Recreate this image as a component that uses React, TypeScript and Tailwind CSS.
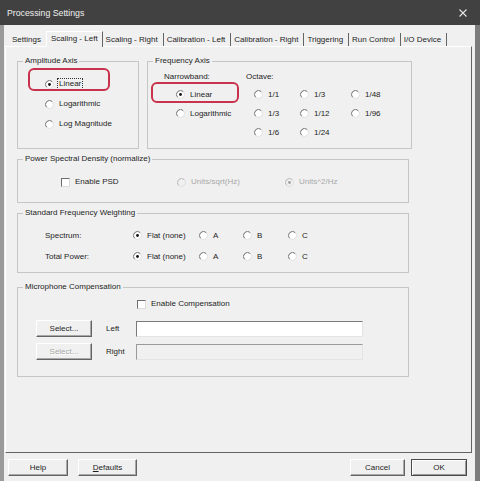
import type { ReactNode } from "react";

function RadioDot({ checked, disabled }: { checked?: boolean; disabled?: boolean }) {
  return (
    <svg width="9" height="9" viewBox="0 0 9 9" className="shrink-0">
      <circle cx="4.5" cy="4.5" r="4" fill={disabled ? "#f0f0f0" : "#ffffff"} />
      <path
        d="M1.67 7.33A4 4 0 0 1 7.33 1.67"
        fill="none"
        stroke={disabled ? "#b4b4b4" : "#6e6e6e"}
      />
      <path d="M7.33 1.67A4 4 0 0 1 1.67 7.33" fill="none" stroke="#dedede" />
      {checked ? (
        <circle cx="4.5" cy="4.5" r="1.4" fill={disabled ? "#a0a0a0" : "#111111"} />
      ) : null}
    </svg>
  );
}

function Radio({
  label,
  checked,
  disabled,
  focus,
  className = "",
}: {
  label: string;
  checked?: boolean;
  disabled?: boolean;
  focus?: boolean;
  className?: string;
}) {
  return (
    <div className={`flex items-center gap-[5px] ${className}`}>
      <RadioDot checked={checked} disabled={disabled} />
      {focus ? (
        <span className="-ml-[2px] border border-dotted border-[#333] px-[1px] leading-[10px]">
          {label}
        </span>
      ) : (
        <span className={disabled ? "text-[#a9a9a9]" : ""}>{label}</span>
      )}
    </div>
  );
}

function Check({ label, className = "" }: { label: string; className?: string }) {
  return (
    <div className={`flex items-center gap-[5px] ${className}`}>
      <span className="h-[9px] w-[9px] shrink-0 border border-t-[#6e6e6e] border-l-[#6e6e6e] border-r-[#dcdcdc] border-b-[#dcdcdc] bg-white" />
      <span>{label}</span>
    </div>
  );
}

function Group({
  title,
  className = "",
  children,
}: {
  title: string;
  className?: string;
  children: ReactNode;
}) {
  return (
    <fieldset className={`relative border border-[#c6c6c6] ${className}`}>
      <legend className="ml-[5px] px-[2px] leading-[10px]">{title}</legend>
      {children}
    </fieldset>
  );
}

function Btn({
  children,
  className = "",
  disabled,
  primary,
}: {
  children: ReactNode;
  className?: string;
  disabled?: boolean;
  primary?: boolean;
}) {
  const edge = primary
    ? "border border-[#4a4a4a] shadow-[inset_1px_1px_#ffffff,inset_-1px_-1px_#9a9a9a]"
    : "border border-t-white border-l-white border-r-[#646464] border-b-[#646464] shadow-[inset_-1px_-1px_#a8a8a8]";
  return (
    <div
      className={`flex h-[17px] items-center justify-center bg-[#f0f0f0] ${edge} ${
        disabled ? "text-[#a8a8a8] [text-shadow:1px_1px_#ffffff]" : ""
      } ${className}`}
    >
      {children}
    </div>
  );
}

const TABS = [
  "Scaling - Right",
  "Calibration - Left",
  "Calibration - Right",
  "Triggering",
  "Run Control",
  "I/O Device",
];

export default function App() {
  return (
    <div className="flex h-[481px] w-[480px] flex-col overflow-hidden bg-[#f0f0f0] font-['Liberation_Sans',Arial,sans-serif] text-[8px] leading-[10px] text-[#1e1e1e]">
      {/* title bar */}
      <div className="flex h-[25px] shrink-0 items-center justify-between bg-[#414141] pl-[7px] pr-[13px]">
        <span className="text-[8.75px] text-[#f0f0f0]">Processing Settings</span>
        <svg width="8" height="8" viewBox="0 0 8 8">
          <path d="M0.5 0.5L7.5 7.5M7.5 0.5L0.5 7.5" stroke="#e4e4e4" strokeWidth="1.1" />
        </svg>
      </div>

      <div className="flex flex-1 flex-col border-l-[4px] border-r-[5px] border-l-[#9a9a9a] border-r-[#7c7c7c]">
        {/* tabs */}
        <div className="flex h-[21px] shrink-0 items-end pl-[4px]">
          <div className="h-[13px] pl-[4px] pr-[5px] leading-[13px]">Settings</div>
          <div className="relative z-10 -mb-[1px] h-[16px] border-l border-t border-r border-l-white border-t-white border-r-[#646464] bg-[#f0f0f0] pl-[4px] pr-[4px] leading-[13px]">
            Scaling - Left
          </div>
          {TABS.map((t) => (
            <div
              key={t}
              className="h-[13px] border-r border-r-[#646464] pl-[3px] pr-[5px] leading-[13px]"
            >
              {t}
            </div>
          ))}
        </div>

        {/* tab page */}
        <div className="ml-[1px] flex h-[407px] w-[467px] shrink-0 flex-col border border-t-white border-l-white border-r-[#646464] border-b-[#646464] pl-[11px] pt-[9px]">
          <div className="flex items-start gap-[8px]">
            <Group title="Amplitude Axis" className="h-[93px] w-[122px]">
              <div className="flex flex-col pl-[27px] pt-[8px]">
                <Radio label="Linear" checked focus className="h-[20px]" />
                <Radio label="Logarithmic" className="h-[20px]" />
                <Radio label="Log Magnitude" className="h-[20px]" />
              </div>
              <div className="pointer-events-none absolute left-[10px] top-[2px] h-[23px] w-[82px] rounded-[6px] border-2 border-[#c8324c]" />
            </Group>

            <Group title="Frequency Axis" className="h-[93px] w-[263px]">
              <div className="flex pl-[16px] pt-[3px]">
                <div className="flex w-[82px] flex-col">
                  <div className="flex h-[16px] items-center">Narrowband:</div>
                  <Radio label="Linear" checked className="h-[19px] pl-[12px]" />
                  <Radio label="Logarithmic" className="h-[19px] pl-[12px]" />
                </div>
                <div className="flex flex-col">
                  <div className="flex h-[16px] items-center">Octave:</div>
                  <div className="grid grid-cols-[46px_51px_60px] pl-[8px]">
                    <Radio label="1/1" className="h-[19px]" />
                    <Radio label="1/3" className="h-[19px]" />
                    <Radio label="1/48" className="h-[19px]" />
                    <Radio label="1/3" className="h-[19px]" />
                    <Radio label="1/12" className="h-[19px]" />
                    <Radio label="1/96" className="h-[19px]" />
                    <Radio label="1/6" className="h-[19px]" />
                    <Radio label="1/24" className="h-[19px]" />
                  </div>
                </div>
              </div>
              <div className="pointer-events-none absolute left-[3px] top-[16px] h-[21px] w-[88px] rounded-[6px] border-2 border-[#c8324c]" />
            </Group>
          </div>

          <Group title="Power Spectral Density (normalize)" className="mt-[5px] h-[49px] w-[392px]">
            <div className="flex pl-[43px] pt-[8px]">
              <Check label="Enable PSD" className="h-[20px] w-[116px]" />
              <Radio label="Units/sqrt(Hz)" disabled className="h-[20px] w-[108px]" />
              <Radio label="Units^2/Hz" checked disabled className="h-[20px]" />
            </div>
          </Group>

          <Group title="Standard Frequency Weighting" className="mt-[5px] h-[65px] w-[392px]">
            <div className="flex flex-col pl-[27px] pt-[7px]">
              {["Spectrum:", "Total Power:"].map((row) => (
                <div key={row} className="flex h-[21px] items-center">
                  <span className="w-[88px]">{row}</span>
                  <Radio label="Flat (none)" checked className="w-[66px]" />
                  <Radio label="A" className="w-[44px]" />
                  <Radio label="B" className="w-[45px]" />
                  <Radio label="C" />
                </div>
              ))}
            </div>
          </Group>

          <Group title="Microphone Compensation" className="mt-[9px] h-[95px] w-[392px]">
            <div className="flex flex-col pl-[18px] pt-[4px]">
              <Check label="Enable Compensation" className="h-[16px] pl-[101px]" />
              <div className="mt-[8px] flex items-center">
                <Btn className="w-[56px]">Select...</Btn>
                <span className="ml-[14px] w-[30px]">Left</span>
                <div className="h-[16px] w-[227px] border border-t-[#7a7a7a] border-l-[#7a7a7a] border-r-[#e4e4e4] border-b-[#e4e4e4] bg-white" />
              </div>
              <div className="mt-[6px] flex items-center">
                <Btn className="w-[56px]" disabled>
                  Select...
                </Btn>
                <span className="ml-[14px] w-[30px]">Right</span>
                <div className="h-[16px] w-[227px] border border-t-[#9a9a9a] border-l-[#9a9a9a] border-r-[#e4e4e4] border-b-[#e4e4e4] bg-[#f0f0f0]" />
              </div>
            </div>
          </Group>
        </div>

        {/* dialog buttons */}
        <div className="flex items-start pl-[4px] pr-[8px] pt-[6px]">
          <Btn className="w-[60px]">Help</Btn>
          <Btn className="ml-[10px] w-[59px]">
            <span>
              <span className="underline">D</span>efaults
            </span>
          </Btn>
          <div className="flex-1" />
          <Btn className="w-[55px]">Cancel</Btn>
          <Btn className="ml-[6px] w-[56px]" primary>
            OK
          </Btn>
        </div>
      </div>
    </div>
  );
}
